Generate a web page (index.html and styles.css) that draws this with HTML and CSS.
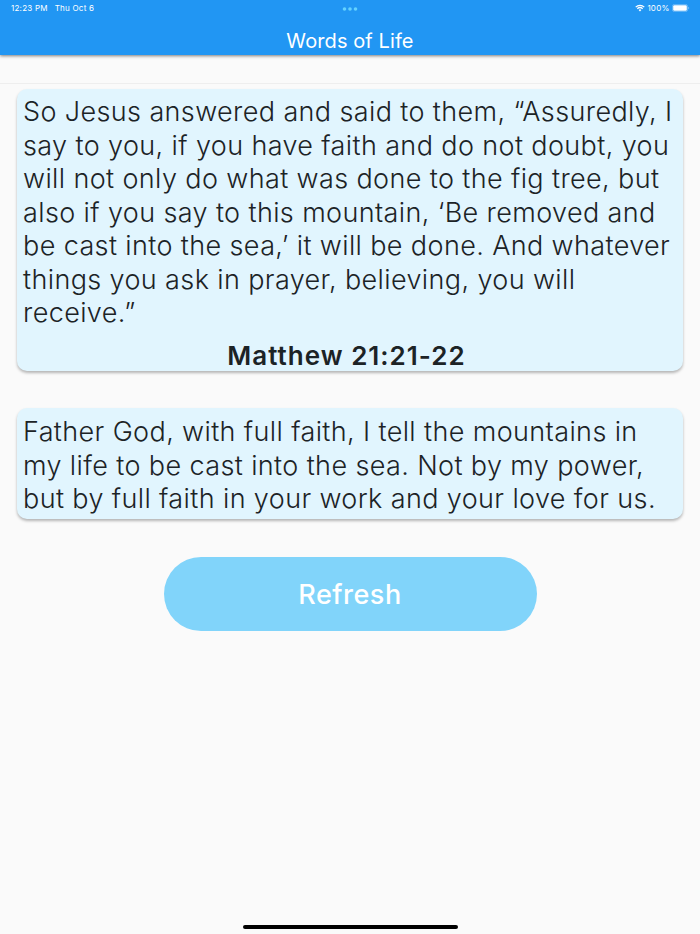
FILE: index.html
```html
<!DOCTYPE html>
<html lang="en">
<head>
    <meta charset="UTF-8">
    <title>Words of Life</title>
    <link rel="stylesheet" href="styles.css">
</head>
<body>

    <header class="app-bar">
        <div class="status-bar">
            <div class="status-left">
                <span class="time">12:23 PM</span>
                <span class="day">Thu Oct 6</span>
            </div>
            <svg class="dots" width="16" height="4" viewBox="0 0 16 4">
                <circle cx="2.5" cy="2" r="1.8"/>
                <circle cx="8" cy="2" r="1.8"/>
                <circle cx="13.5" cy="2" r="1.8"/>
            </svg>
            <div class="status-right">
                <svg class="wifi" width="10" height="8" viewBox="0 0 10 8">
                    <path d="M0.7 3.1a6.2 6.2 0 0 1 8.6 0M2.3 4.8a3.9 3.9 0 0 1 5.4 0"/>
                    <path class="wifi-base" d="M3.6 6a2 2 0 0 1 2.8 0L5 7.5z"/>
                </svg>
                <span class="percent">100%</span>
                <svg class="battery" width="18" height="8" viewBox="0 0 18 8">
                    <rect class="battery-case" x="0.4" y="0.4" width="15.2" height="7.2" rx="2"/>
                    <rect class="battery-level" x="1.2" y="1.2" width="13.6" height="5.6" rx="1.2"/>
                    <path class="battery-tip" d="M16.4 2.8v2.4a1.3 1.3 0 0 0 0-2.4z"/>
                </svg>
            </div>
        </div>
        <h1>Words of Life</h1>
    </header>

    <div class="divider"></div>

    <main>
        <div class="card verse">
            <p>So Jesus answered and said to them, “Assuredly, I<br>
            say to you, if you have faith and do not doubt, you<br>
            will not only do what was done to the fig tree, but<br>
            also if you say to this mountain, ‘Be removed and<br>
            be cast into the sea,’ it will be done. And whatever<br>
            things you ask in prayer, believing, you will<br>
            receive.”</p>
            <h2>Matthew 21:21-22</h2>
        </div>

        <div class="card prayer">
            <p>Father God, with full faith, I tell the mountains in<br>
            my life to be cast into the sea. Not by my power,<br>
            but by full faith in your work and your love for us.</p>
        </div>

        <button class="refresh">Refresh</button>
    </main>

    <div class="home-indicator"></div>

</body>
</html>
```
FILE: styles.css
```css
* {
    box-sizing: border-box;
}
body {
    margin: 0;
    height: 934px;
    display: flex;
    flex-direction: column;
    background-color: #fafafa;
    font-family: Inter, "Liberation Sans", sans-serif;
    overflow: hidden;
}
.app-bar {
    height: 55px;
    flex: none;
    background-color: #2196f3;
    color: #fff;
    box-shadow: 0 1px 3px rgba(0, 0, 0, 0.5);
}
.status-bar {
    height: 17px;
    padding: 0 10.5px 0 11px;
    display: grid;
    grid-template-columns: 1fr 16px 1fr;
    align-items: center;
    font-size: 8px;
    font-weight: 400;
    letter-spacing: 0.23px;
}
.status-left {
    display: flex;
    gap: 7px;
    padding-bottom: 1px;
}
.status-right {
    display: flex;
    justify-content: flex-end;
    align-items: center;
    gap: 2px;
    padding-bottom: 1px;
}
.dots {
    fill: #64d2ff;
}
.wifi {
    fill: none;
    stroke: #fff;
    stroke-width: 1.2;
}
.wifi-base {
    fill: #fff;
    stroke: none;
}
.battery-case {
    fill: none;
    stroke: #fff;
    stroke-width: 0.6;
    opacity: 0.5;
}
.battery-level {
    fill: #fff;
}
.battery-tip {
    fill: #fff;
    opacity: 0.5;
}
h1 {
    margin: 0;
    font-size: 20px;
    font-weight: 400;
    line-height: 24px;
    letter-spacing: 0.1px;
    padding-top: 12px;
    text-align: center;
}
.divider {
    height: 29px;
    flex: none;
    border-bottom: 1px solid #eee;
}
main {
    padding: 5px 17px 0;
    display: flex;
    flex-direction: column;
    align-items: center;
}
.card {
    width: 666px;
    background-color: #e1f5fe;
    border-radius: 10px;
    box-shadow: 0 2px 3px rgba(0, 0, 0, 0.28);
    color: #1c2326;
    padding: 6.4px 0 0 6px;
}
.card p {
    margin: 0;
    font-size: 27px;
    font-weight: 300;
    line-height: 33.5px;
    letter-spacing: 0.38px;
    white-space: nowrap;
}
.verse {
    height: 282px;
}
.verse h2 {
    margin: 9.4px 0 0;
    padding-right: 13px;
    font-size: 26px;
    font-weight: 600;
    line-height: 34px;
    letter-spacing: 1px;
    text-align: center;
}
.prayer {
    height: 111px;
    margin-top: 37px;
    padding-top: 7px;
}
.refresh {
    width: 373px;
    height: 74px;
    margin-top: 38px;
    padding-top: 2px;
    border: none;
    border-radius: 37px;
    background-color: #81d4fa;
    color: #fff;
    font-family: inherit;
    font-size: 27px;
    font-weight: 500;
    letter-spacing: 0.5px;
}
.home-indicator {
    width: 215px;
    height: 4px;
    margin: auto auto 5.5px;
    border-radius: 2px;
    background-color: #000;
}
```
